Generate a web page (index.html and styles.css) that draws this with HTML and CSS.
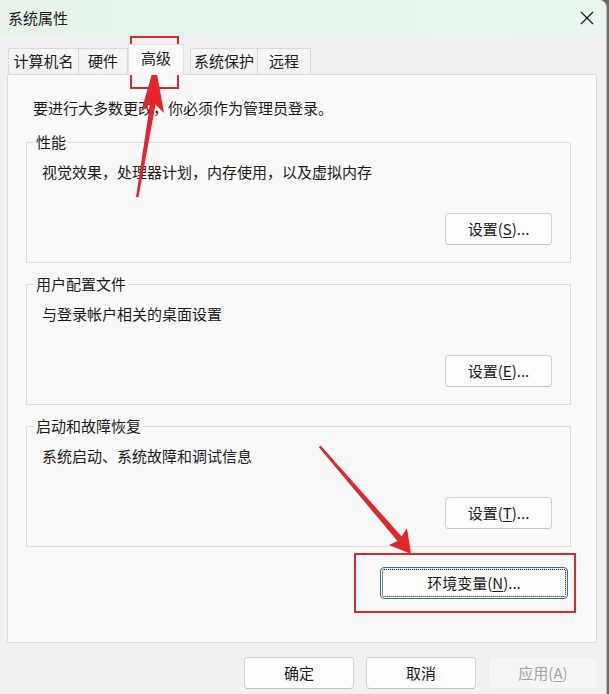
FILE: index.html
```html
<!DOCTYPE html>
<html lang="zh-CN">
<head>
<meta charset="utf-8">
<title>系统属性</title>
<link rel="stylesheet" href="styles.css">
</head>
<body>
<div class="window">
  <div class="titlebar">
    <span class="title">系统属性</span>
    <svg class="close" width="14" height="14" viewBox="0 0 14 14"><path d="M1 1L13 13M13 1L1 13" stroke="#1a1a1a" stroke-width="1.2"/></svg>
  </div>
  <div class="tabs">
    <div class="tab t1">计算机名</div>
    <div class="tab t2">硬件</div>
    <div class="tab t3 active">高级</div>
    <div class="tab t4">系统保护</div>
    <div class="tab t5">远程</div>
  </div>
  <div class="panel">
    <p class="note">要进行大多数更改，你必须作为管理员登录。</p>
    <fieldset class="group">
      <legend>性能</legend>
      <div class="group-body">
        <p class="desc">视觉效果，处理器计划，内存使用，以及虚拟内存</p>
        <button class="btn set">设置(<u>S</u>)...</button>
      </div>
    </fieldset>
    <fieldset class="group">
      <legend>用户配置文件</legend>
      <div class="group-body">
        <p class="desc">与登录帐户相关的桌面设置</p>
        <button class="btn set">设置(<u>E</u>)...</button>
      </div>
    </fieldset>
    <fieldset class="group last">
      <legend>启动和故障恢复</legend>
      <div class="group-body">
        <p class="desc">系统启动、系统故障和调试信息</p>
        <button class="btn set">设置(<u>T</u>)...</button>
      </div>
    </fieldset>
    <div class="env-row">
      <button class="btn env">环境变量(<u>N</u>)...</button>
    </div>
  </div>
  <div class="footer">
    <button class="btn foot">确定</button>
    <button class="btn foot">取消</button>
    <button class="btn foot disabled">应用(<u>A</u>)</button>
  </div>
  <svg class="annot" width="609" height="694" viewBox="0 0 609 694">
    <rect x="131" y="37" width="47" height="51" fill="none" stroke="#d52b32" stroke-width="2"/>
    <rect x="355" y="554" width="220" height="58" fill="none" stroke="#d52b32" stroke-width="2"/>
    <polygon points="136,197 150,104 141,112 155,63 164,113 155.5,104.5 138.5,197" fill="#e2262c"/>
    <polygon points="319,447.5 397.5,541 389,545 411,554 407,528 401.5,536.5 320.5,445.5" fill="#e2262c"/>
  </svg>
</div>
</body>
</html>
```

FILE: styles.css
```css
* { box-sizing: border-box; }

html, body {
  margin: 0;
  padding: 0;
}

body {
  background: #6b6b6b;
  font-family: "Noto Sans CJK SC", "Noto Sans", sans-serif;
  font-size: 15px;
  line-height: 20px;
  color: #1b1b1b;
}

.window {
  position: relative;
  width: 607px;
  height: 694px;
  background: #f0f0f0;
  border-right: 1px solid #bdbdbd;
  border-top-right-radius: 8px;
  overflow: hidden;
}

.titlebar {
  height: 36px;
  display: flex;
  align-items: center;
  justify-content: space-between;
  padding: 0 12px 0 8px;
  background: linear-gradient(to right, #e5f3e9, #e8f6ee);
}

.title {
  font-size: 15px;
  line-height: 20px;
}

.close { display: block; }

.tabs {
  display: flex;
  align-items: flex-end;
  margin-top: 8px;
  padding-left: 8px;
  height: 30px;
}

.tab {
  height: 26px;
  line-height: 24px;
  text-align: center;
  background: #f4f4f4;
  border: 1px solid #dadada;
  border-bottom: none;
  white-space: nowrap;
}

.t1 { width: 71px; }
.t2 { width: 49px; border-left: none; }
.t3 { width: 56px; }
.t4 { width: 68px; margin-left: 6px; }
.t5 { width: 53px; border-left: none; }

.tab.active {
  height: 31px;
  line-height: 26px;
  background: #f9f9f9;
  border-color: #e2e2e2;
  margin-bottom: -1px;
  position: relative;
  z-index: 1;
}

.panel {
  margin-left: 7px;
  width: 590px;
  height: 569px;
  background: #f9f9f9;
  border: 1px solid #dcdcdc;
  padding: 23px 25px 0 18px;
}

.note {
  margin: 0 0 14px 7px;
}

.group {
  margin: 0 0 11px 0;
  padding: 0;
  border: 1px solid #dcdcdc;
  min-width: 0;
}

.group.last { margin-bottom: 20px; }

.group legend {
  margin-left: 7px;
  padding: 0 2px;
  font-size: 15px;
  line-height: 20px;
}

.group-body {
  height: 110px;
  padding: 10px 18px 17px 15px;
  display: flex;
  flex-direction: column;
  align-items: flex-start;
}

.desc { margin: 0; }

.btn {
  font-family: "Noto Sans CJK SC", "Noto Sans", sans-serif;
  font-size: 15px;
  line-height: 20px;
  height: 32px;
  padding: 0;
  color: #1b1b1b;
  background: #fdfdfd;
  border: 1px solid #d2d2d2;
  border-bottom-color: #c4c4c4;
  border-radius: 4px;
}

.btn u { text-underline-offset: 2px; }

.set {
  width: 107px;
  align-self: flex-end;
  margin-top: auto;
}

.env-row {
  display: flex;
  justify-content: flex-end;
  padding-right: 3px;
}

.env {
  width: 188px;
  border: 1px solid #2a72b8;
  outline: 1px dotted #111;
  outline-offset: -3px;
}

.footer {
  display: flex;
  justify-content: flex-end;
  gap: 12px;
  margin-top: 14px;
  padding-right: 8px;
}

.foot { width: 110px; }

.foot.disabled {
  background: #f5f5f5;
  border-color: #ececec;
  color: #a3a3a3;
}

.annot {
  position: absolute;
  top: 0;
  left: 0;
  pointer-events: none;
}
```
